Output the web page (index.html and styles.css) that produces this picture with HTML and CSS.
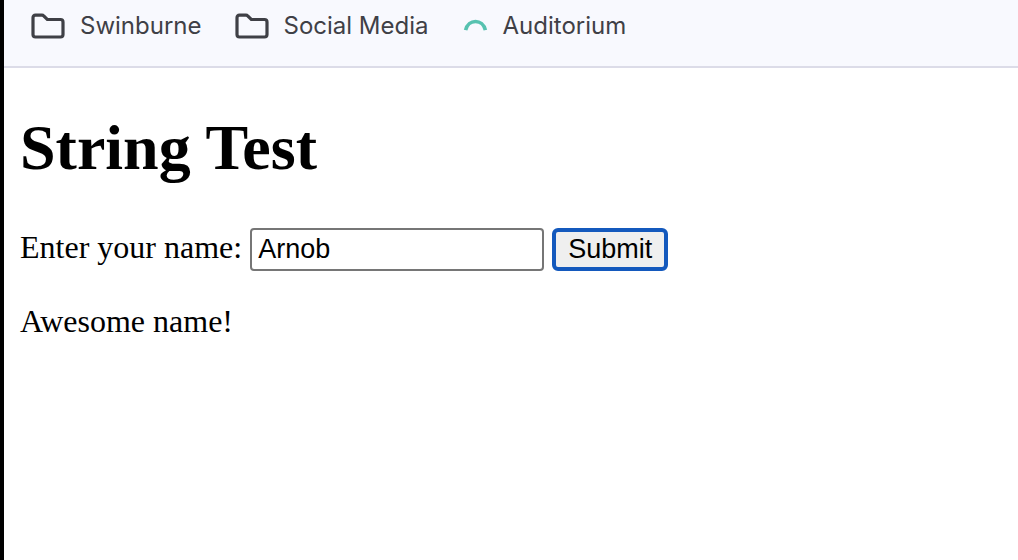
FILE: index.html
```html
<!DOCTYPE html>
<html lang="en">
<head>
<meta charset="utf-8">
<title>String Test</title>
<link rel="stylesheet" href="styles.css">
</head>
<body>
<nav class="bookmarks" aria-label="Bookmarks">
  <a class="bookmark" href="#"><svg class="icon" viewBox="0 0 36 28"><path d="M5.500 3.200H12Q13 3.200 13.700 4L17.300 7.500H30.500Q33 7.500 33 10V22.500Q33 25 30.500 25H5.500Q3 25 3 22.500V5.700Q3 3.200 5.500 3.200Z" fill="none" stroke="#3f4046" stroke-width="3.200"/></svg><span>Swinburne</span></a>
  <a class="bookmark" href="#"><svg class="icon" viewBox="0 0 36 28"><path d="M5.500 3.200H12Q13 3.200 13.700 4L17.300 7.500H30.500Q33 7.500 33 10V22.500Q33 25 30.500 25H5.500Q3 25 3 22.500V5.700Q3 3.200 5.500 3.200Z" fill="none" stroke="#3f4046" stroke-width="3.200"/></svg><span>Social Media</span></a>
  <a class="bookmark" href="#"><svg class="icon icon-arc" viewBox="0 0 28 28"><path d="M4.600 18.200C7.200 6.500 21.800 6.500 24.400 18.200" fill="none" stroke="#57c2b0" stroke-width="3.600"/></svg><span>Auditorium</span></a>
</nav>
<main class="page">
  <h1 class="title">String Test</h1>
  <form class="form">
    <label for="name">Enter your name:</label>
    <input class="field" id="name" type="text" value="Arnob">
    <button class="submit" type="button">Submit</button>
  </form>
  <p class="result">Awesome name!</p>
</main>
</body>
</html>
```
FILE: styles.css
```css
* {
  box-sizing: border-box;
}

body {
  margin: 0;
  min-height: 100vh;
  border-left: 4px solid #000;
  background: #fff;
  color: #000;
  font: 32px/36px "Liberation Serif", "Times New Roman", serif;
}

.bookmarks {
  display: flex;
  gap: 32px;
  height: 68px;
  padding: 10px 26px 0;
  border-bottom: 2px solid #dcdce8;
  background: #f8f9fe;
  font: 24px/32px Inter, sans-serif;
}

.bookmark {
  display: flex;
  gap: 14px;
  height: 32px;
  align-items: center;
  color: #3f4046;
  text-decoration: none;
}

.icon {
  width: 36px;
  height: 28px;
}

.icon-arc {
  width: 28px;
}

.page {
  padding: 42px 16px;
}

.title {
  margin: 0 0 42px;
  font-size: 64px;
  line-height: 76px;
}

.form {
  display: flex;
  align-items: baseline;
  gap: 8px;
}

.field {
  width: 294px;
  height: 43px;
  padding: 0 6px;
  border: 2px solid #767676;
  border-radius: 4px;
  background: #fff;
  color: #000;
  font: 27px "Liberation Sans", Arial, sans-serif;
}

.submit {
  height: 43px;
  padding: 0 12px;
  border: 4px solid #1459bd;
  border-radius: 6px;
  background: #efefef;
  color: #000;
  font: 27px "Liberation Sans", Arial, sans-serif;
}

.result {
  margin: 32px 0;
}
```
